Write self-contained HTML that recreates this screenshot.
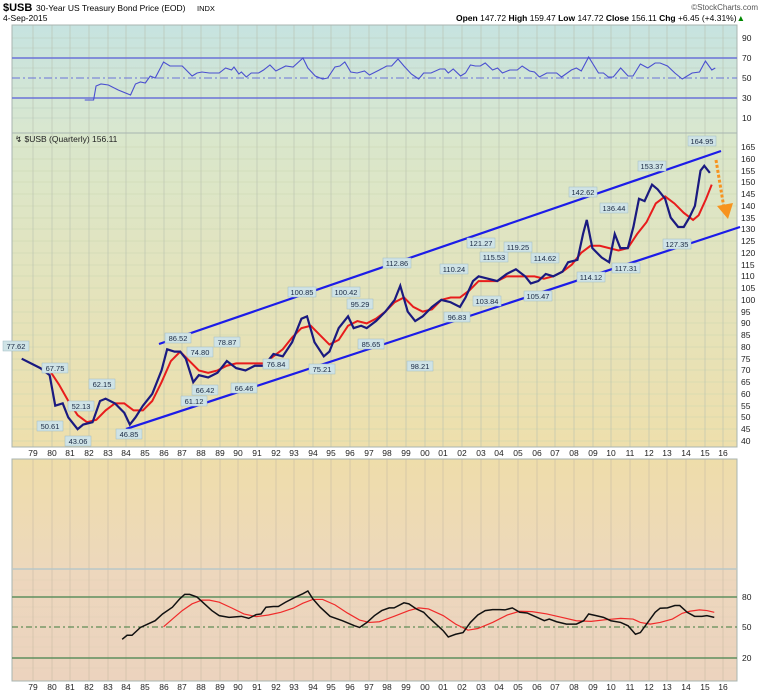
<!DOCTYPE html>
<html><head><meta charset="utf-8"><style>
body{margin:0;background:#fff;width:765px;height:692px;overflow:hidden;font-family:"Liberation Sans",sans-serif}
svg text{font-family:"Liberation Sans",sans-serif}
</style></head><body>
<svg width="765" height="692" viewBox="0 0 765 692" xmlns="http://www.w3.org/2000/svg">
<defs>
<linearGradient id="g1" x1="0" y1="0" x2="0" y2="1"><stop offset="0" stop-color="#c6e3e0"/><stop offset="1" stop-color="#d9e7cf"/></linearGradient>
<linearGradient id="g2" x1="0" y1="0" x2="0" y2="1"><stop offset="0" stop-color="#d9e7cc"/><stop offset="1" stop-color="#eedfac"/></linearGradient>
<linearGradient id="g3" x1="0" y1="0" x2="0" y2="1"><stop offset="0" stop-color="#eeddaa"/><stop offset="1" stop-color="#edd8bc"/></linearGradient>
<linearGradient id="g4" x1="0" y1="0" x2="0" y2="1"><stop offset="0" stop-color="#edd7bd"/><stop offset="1" stop-color="#ecd3be"/></linearGradient>
</defs>
<!-- header -->
<text x="3" y="11" font-size="11" font-weight="bold">$USB</text>
<text x="36" y="11" font-size="8.5">30-Year US Treasury Bond Price (EOD)</text>
<text x="197" y="11" font-size="7.5">INDX</text>
<text x="3" y="21" font-size="8.5">4-Sep-2015</text>
<text x="758" y="10" font-size="8" fill="#555" text-anchor="end">©StockCharts.com</text>
<text x="745" y="21" font-size="8.5" text-anchor="end"><tspan font-weight="bold">Open</tspan> 147.72 <tspan font-weight="bold">High</tspan> 159.47 <tspan font-weight="bold">Low</tspan> 147.72 <tspan font-weight="bold">Close</tspan> 156.11 <tspan font-weight="bold">Chg</tspan> +6.45 (+4.31%)<tspan fill="#080">▲</tspan></text>

<!-- panels -->
<rect x="12" y="25" width="725" height="108" fill="url(#g1)"/>
<rect x="12" y="133" width="725" height="314" fill="url(#g2)"/>
<rect x="12" y="459" width="725" height="110" fill="url(#g3)"/>
<rect x="12" y="569" width="725" height="112" fill="url(#g4)"/>

<g stroke="#b9cbbf" stroke-width="0.6">
<path d="M12 38H737M12 48H737M12 68H737M12 88H737M12 108H737M12 118H737"/>
</g>
<g stroke="#cad6b0" stroke-width="0.6">
<path d="M12 147H737M12 159H737M12 171H737M12 182H737M12 194H737M12 206H737M12 218H737M12 229H737M12 241H737M12 253H737M12 265H737M12 276H737M12 288H737M12 300H737M12 312H737M12 323H737M12 335H737M12 347H737M12 359H737M12 370H737M12 382H737M12 394H737M12 406H737M12 417H737M12 429H737M12 441H737"/>
</g>
<g stroke="#e0cfb6" stroke-width="0.6">
<path d="M12 580H737M12 590H737M12 607H737M12 617H737M12 637H737M12 647H737M12 668H737"/>
</g>
<g stroke="#b8c0b0" stroke-width="0.6">
<path d="M33 25V447M52 25V447M70 25V447M89 25V447M108 25V447M126 25V447M145 25V447M164 25V447M182 25V447M201 25V447M220 25V447M238 25V447M257 25V447M276 25V447M294 25V447M313 25V447M331 25V447M350 25V447M369 25V447M387 25V447M406 25V447M425 25V447M443 25V447M462 25V447M481 25V447M499 25V447M518 25V447M537 25V447M555 25V447M574 25V447M593 25V447M611 25V447M630 25V447M649 25V447M667 25V447M686 25V447M705 25V447M723 25V447"/>
</g>
<g stroke="#c9bba5" stroke-width="0.6">
<path d="M33 459V681M52 459V681M70 459V681M89 459V681M108 459V681M126 459V681M145 459V681M164 459V681M182 459V681M201 459V681M220 459V681M238 459V681M257 459V681M276 459V681M294 459V681M313 459V681M331 459V681M350 459V681M369 459V681M387 459V681M406 459V681M425 459V681M443 459V681M462 459V681M481 459V681M499 459V681M518 459V681M537 459V681M555 459V681M574 459V681M593 459V681M611 459V681M630 459V681M649 459V681M667 459V681M686 459V681M705 459V681M723 459V681"/>
</g>
<g fill="none" stroke="#a8b4b0" stroke-width="1">
<rect x="12" y="25" width="725" height="422"/><line x1="12" y1="133" x2="737" y2="133"/>
<rect x="12" y="459" width="725" height="222"/><line x1="12" y1="569" x2="737" y2="569" stroke="#b9c7c8" stroke-width="1.5"/>
</g>

<!-- RSI panel -->
<g stroke="#6a72d8" stroke-width="1.6"><line x1="12" y1="58" x2="737" y2="58"/><line x1="12" y1="98" x2="737" y2="98"/></g>
<line x1="12" y1="78" x2="737" y2="78" stroke="#6a72d8" stroke-width="1" stroke-dasharray="8,3,2,3"/>
<g transform="matrix(0.4926 0 0 -1 0 128)"><path fill="none" stroke="#4a4fd0" stroke-width="1.1" vector-effect="non-scaling-stroke" d="M172 28L190 28L195 42L205 44L220 43L240 38L265 33L275 44L285 46L295 45L305 52L315 50L332 66L345 62L370 62L390 52L400 55L410 56L425 55L445 55L458 60L470 58L475 61L485 54L490 56L500 51L510 55L525 55L535 58L548 63L560 57L580 62L595 61L615 70L625 60L640 52L655 49L665 50L680 61L690 62L700 66L712 56L725 55L740 57L750 53L770 58L785 62L795 62L808 69L820 62L835 54L850 49L860 55L875 55L893 59L903 59L910 55L920 59L935 52L945 55L955 63L965 62L975 62L985 65L1000 58L1010 60L1020 55L1035 58L1050 58L1060 62L1075 57L1085 56L1095 51L1110 55L1130 55L1140 51L1160 58L1170 60L1180 57L1195 71L1215 55L1225 55L1235 51L1245 51L1260 60L1275 52L1285 52L1300 64L1315 60L1330 65L1340 65L1355 62L1370 55L1385 49L1405 55L1420 56L1432 67L1445 58L1452 60"/></g>
<g font-size="8.5" fill="#222"><text x="742" y="41">90</text><text x="742" y="61">70</text><text x="742" y="81">50</text><text x="742" y="101">30</text><text x="742" y="121">10</text></g>

<!-- price panel -->
<text x="15" y="142" font-size="8.5" font-family="Liberation Mono" fill="#222">↯ $USB (Quarterly) 156.11</text>
<g stroke="#1c1ce8" stroke-width="2.2"><line x1="159" y1="344" x2="721" y2="151"/><line x1="126" y1="429" x2="740" y2="227"/></g>
<g transform="matrix(18.65 0 0 -2.352 -36877.35 535.08)" fill="none">
<path stroke="#e81c1c" stroke-width="2" vector-effect="non-scaling-stroke" d="M1980 70L1980.5 64L1981 57L1981.5 51L1982 48L1982.5 49L1983 53L1983.5 56L1984 56L1984.5 53L1985 53L1985.5 57L1986 65L1986.5 74L1987 78L1987.5 74L1988 70L1988.5 69L1989 70L1989.5 72L1990 73L1990.5 73L1991 73L1991.5 73L1992 76L1992.5 79L1993 84L1993.5 88L1994 89L1994.5 85L1995 81L1995.5 83L1996 89L1996.5 91L1997 90L1997.5 92L1998 95L1998.5 99L1999 101L1999.5 97L2000 95L2000.5 96L2001 100L2001.5 101L2002 101L2002.5 104L2003 108L2003.5 108L2004 108L2004.5 110L2005 110L2005.5 110L2006 110L2006.5 109L2007 110L2007.5 112L2008 115L2008.5 120L2009 123L2009.5 123L2010 122L2010.5 121L2011 122L2011.5 128L2012 133L2012.5 141L2013 144L2013.5 141L2014 137L2014.5 134L2014.8 136L2015.2 143L2015.5 149"/>
<path stroke="#1a1a80" stroke-width="2.2" vector-effect="non-scaling-stroke" d="M1978.5 75L1979.5 71L1980 68L1980.3 55L1980.7 56L1981 50L1981.5 45L1981.8 47L1982.3 48L1982.7 57L1983 58L1983.5 56L1984 52L1984.3 47L1984.6 50L1985 55L1985.5 60L1986 70L1986.3 79L1986.7 78L1987 78L1987.3 75L1987.7 65L1988 68L1988.5 67L1989 69L1989.5 74L1990 71L1990.5 70L1991 72L1991.5 72L1992 77L1992.5 76L1993 82L1993.5 92L1993.8 93L1994.2 82L1994.7 76L1995 78L1995.5 88L1996 93L1996.3 88L1996.7 89L1997 88L1997.5 91L1998 95L1998.5 100L1998.8 106L1999.2 95L1999.6 91L2000 93L2000.5 97L2001 100L2001.5 99L2002 97L2002.3 101L2002.7 108L2003 110L2003.5 109L2004 108L2004.5 111L2005 113L2005.5 110L2005.8 107L2006.2 108L2006.6 111L2007 110L2007.5 112L2007.8 116L2008.3 117L2008.6 128L2008.8 134L2009.1 122L2009.6 118L2010 116L2010.3 128L2010.6 122L2011 122L2011.3 131L2011.6 143L2011.9 142L2012.3 149L2012.6 147L2013 143L2013.3 135L2013.7 131L2014 131L2014.3 135L2014.6 140L2014.9 155L2015.1 157L2015.4 154"/>
</g>
<line x1="716" y1="160" x2="724" y2="208" stroke="#f7931e" stroke-width="3" stroke-dasharray="3,2"/>
<path d="M717 206L733 203L728 219Z" fill="#f7931e"/>
<g font-size="7.5" fill="#1b2a44" text-anchor="middle">
<g fill="#cfe3e6" stroke="#9fbcc4" stroke-width="0.5">
<rect x="3" y="341" width="26" height="10"/><rect x="42" y="363" width="26" height="10"/><rect x="37" y="421" width="26" height="10"/><rect x="68" y="401" width="26" height="10"/><rect x="65" y="436" width="26" height="10"/><rect x="89" y="379" width="26" height="10"/><rect x="116" y="429" width="26" height="10"/><rect x="165" y="333" width="26" height="10"/><rect x="187" y="347" width="26" height="10"/><rect x="181" y="396" width="26" height="10"/><rect x="192" y="385" width="26" height="10"/><rect x="214" y="337" width="26" height="10"/><rect x="231" y="383" width="26" height="10"/><rect x="263" y="359" width="26" height="10"/><rect x="288" y="287" width="28" height="10"/><rect x="309" y="364" width="26" height="10"/><rect x="332" y="287" width="28" height="10"/><rect x="347" y="299" width="26" height="10"/><rect x="358" y="339" width="26" height="10"/><rect x="383" y="258" width="28" height="10"/><rect x="407" y="361" width="26" height="10"/><rect x="444" y="312" width="26" height="10"/><rect x="440" y="264" width="28" height="10"/><rect x="467" y="238" width="28" height="10"/><rect x="480" y="252" width="28" height="10"/><rect x="473" y="296" width="28" height="10"/><rect x="504" y="242" width="28" height="10"/><rect x="531" y="253" width="28" height="10"/><rect x="524" y="291" width="28" height="10"/><rect x="569" y="187" width="28" height="10"/><rect x="577" y="272" width="28" height="10"/><rect x="600" y="203" width="28" height="10"/><rect x="612" y="263" width="28" height="10"/><rect x="638" y="161" width="28" height="10"/><rect x="663" y="239" width="28" height="10"/><rect x="688" y="136" width="28" height="10"/>
</g>
<text x="16" y="349">77.62</text><text x="55" y="371">67.75</text><text x="50" y="429">50.61</text><text x="81" y="409">52.13</text><text x="78" y="444">43.06</text><text x="102" y="387">62.15</text><text x="129" y="437">46.85</text><text x="178" y="341">86.52</text><text x="200" y="355">74.80</text><text x="194" y="404">61.12</text><text x="205" y="393">66.42</text><text x="227" y="345">78.87</text><text x="244" y="391">66.46</text><text x="276" y="367">76.84</text><text x="302" y="295">100.85</text><text x="322" y="372">75.21</text><text x="346" y="295">100.42</text><text x="360" y="307">95.29</text><text x="371" y="347">85.65</text><text x="397" y="266">112.86</text><text x="420" y="369">98.21</text><text x="457" y="320">96.83</text><text x="454" y="272">110.24</text><text x="481" y="246">121.27</text><text x="494" y="260">115.53</text><text x="487" y="304">103.84</text><text x="518" y="250">119.25</text><text x="545" y="261">114.62</text><text x="538" y="299">105.47</text><text x="583" y="195">142.62</text><text x="591" y="280">114.12</text><text x="614" y="211">136.44</text><text x="626" y="271">117.31</text><text x="652" y="169">153.37</text><text x="677" y="247">127.35</text><text x="702" y="144">164.95</text>
</g>
<g font-size="8.5" fill="#222">
<text x="741" y="150">165</text><text x="741" y="162">160</text><text x="741" y="174">155</text><text x="741" y="185">150</text><text x="741" y="197">145</text><text x="741" y="209">140</text><text x="741" y="221">135</text><text x="741" y="232">130</text><text x="741" y="244">125</text><text x="741" y="256">120</text><text x="741" y="268">115</text><text x="741" y="279">110</text><text x="741" y="291">105</text><text x="741" y="303">100</text><text x="741" y="315">95</text><text x="741" y="326">90</text><text x="741" y="338">85</text><text x="741" y="350">80</text><text x="741" y="362">75</text><text x="741" y="373">70</text><text x="741" y="385">65</text><text x="741" y="397">60</text><text x="741" y="409">55</text><text x="741" y="420">50</text><text x="741" y="432">45</text><text x="741" y="444">40</text>
</g>
<g font-size="8.5" fill="#222" text-anchor="middle" id="yl">
<text x="33" y="456">79</text><text x="52" y="456">80</text><text x="70" y="456">81</text><text x="89" y="456">82</text><text x="108" y="456">83</text><text x="126" y="456">84</text><text x="145" y="456">85</text><text x="164" y="456">86</text><text x="182" y="456">87</text><text x="201" y="456">88</text><text x="220" y="456">89</text><text x="238" y="456">90</text><text x="257" y="456">91</text><text x="276" y="456">92</text><text x="294" y="456">93</text><text x="313" y="456">94</text><text x="331" y="456">95</text><text x="350" y="456">96</text><text x="369" y="456">97</text><text x="387" y="456">98</text><text x="406" y="456">99</text><text x="425" y="456">00</text><text x="443" y="456">01</text><text x="462" y="456">02</text><text x="481" y="456">03</text><text x="499" y="456">04</text><text x="518" y="456">05</text><text x="537" y="456">06</text><text x="555" y="456">07</text><text x="574" y="456">08</text><text x="593" y="456">09</text><text x="611" y="456">10</text><text x="630" y="456">11</text><text x="649" y="456">12</text><text x="667" y="456">13</text><text x="686" y="456">14</text><text x="705" y="456">15</text><text x="723" y="456">16</text>
</g>
<use href="#yl" y="234"/>

<g stroke="#5f8f5f" stroke-width="1.6"><line x1="12" y1="597" x2="737" y2="597"/><line x1="12" y1="658" x2="737" y2="658"/></g>
<line x1="12" y1="627" x2="737" y2="627" stroke="#3d7a3d" stroke-width="1" stroke-dasharray="6,3,2,3"/>
<g transform="matrix(0.4926 0 0 0.3378 0 440)" fill="none">
<path stroke="#f02a2a" stroke-width="1.2" vector-effect="non-scaling-stroke" d="M332 553L350 530L370 505L390 485L410 474L425 474L445 480L470 497L495 515L520 523L545 518L570 510L595 498L615 483L635 472L655 472L680 488L705 512L730 533L750 540L770 538L800 522L830 505L850 497L870 500L900 520L925 545L950 563L970 558L1000 540L1030 518L1055 507L1080 508L1110 515L1140 525L1170 535L1200 537L1230 532L1260 528L1285 530L1300 540L1320 545L1340 540L1365 530L1385 513L1400 507L1420 503L1435 505L1450 510"/>
<path stroke="#111" stroke-width="1.5" vector-effect="non-scaling-stroke" d="M248 590L258 578L268 578L285 555L300 545L315 535L330 515L350 495L365 470L375 457L385 457L400 465L415 485L430 505L445 520L465 525L490 522L505 528L520 517L530 515L540 495L555 493L565 493L580 480L600 465L615 455L625 447L635 470L650 495L670 522L695 535L720 550L730 555L745 540L760 520L775 505L790 497L800 497L820 482L830 485L845 500L860 510L870 525L885 545L900 565L910 583L925 575L940 570L955 540L970 518L985 505L1000 502L1015 502L1025 503L1040 497L1055 510L1070 512L1090 525L1105 535L1115 530L1130 538L1150 545L1170 545L1185 535L1195 515L1210 520L1225 525L1240 535L1260 540L1275 550L1290 575L1300 570L1315 540L1330 510L1340 498L1355 497L1370 490L1380 490L1395 510L1410 522L1425 522L1435 520L1450 525"/>
</g>
<g font-size="8.5" fill="#222"><text x="742" y="600">80</text><text x="742" y="630">50</text><text x="742" y="661">20</text></g>
</svg>
</body></html>
